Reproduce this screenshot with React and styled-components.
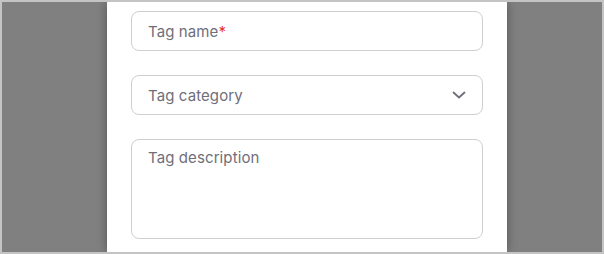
import styled, { createGlobalStyle } from "styled-components";

const GlobalStyle = createGlobalStyle`
  html, body {
    margin: 0;
    padding: 0;
  }
  body {
    font-family: Inter, "Noto Sans", sans-serif;
  }
`;

const Frame = styled.div`
  box-sizing: border-box;
  width: 604px;
  height: 254px;
  border: 2px solid #c4c4c4;
  background: #808080;
  overflow: hidden;
  display: flex;
`;

const Modal = styled.div`
  box-sizing: border-box;
  width: 400px;
  margin-left: 105px;
  background: #ffffff;
  padding: 9px 24px 0;
  display: flex;
  flex-direction: column;
  gap: 24px;
  box-shadow: 0 0 10px rgba(0, 0, 0, 0.35);
`;

const Field = styled.div`
  box-sizing: border-box;
  width: 352px;
  height: ${(p) => p.$height || 40}px;
  flex-shrink: 0;
  border: 1px solid #cfcfd3;
  border-radius: 8px;
  background: #fff;
  display: flex;
  align-items: ${(p) => (p.$multiline ? "flex-start" : "center")};
  justify-content: space-between;
  padding: ${(p) => (p.$multiline ? "8px 16px" : "0 16px")};
`;

const Placeholder = styled.span`
  font-size: 15px;
  color: #6f6e7a;
  letter-spacing: 0.1px;
`;

const Required = styled.span`
  color: #e8341c;
`;

const Chevron = () => (
  <svg width="14" height="8" viewBox="0 0 14 8" fill="none">
    <path
      d="M1.5 1.5 L7 6.5 L12.5 1.5"
      stroke="#6f6e7a"
      strokeWidth="1.8"
      strokeLinecap="round"
      strokeLinejoin="round"
    />
  </svg>
);

const App = () => (
  <>
    <GlobalStyle />
    <Frame>
      <Modal>
        <Field>
          <Placeholder>
            Tag name<Required>*</Required>
          </Placeholder>
        </Field>
        <Field>
          <Placeholder>Tag category</Placeholder>
          <Chevron />
        </Field>
        <Field $height={100} $multiline>
          <Placeholder>Tag description</Placeholder>
        </Field>
      </Modal>
    </Frame>
  </>
);

export default App;
